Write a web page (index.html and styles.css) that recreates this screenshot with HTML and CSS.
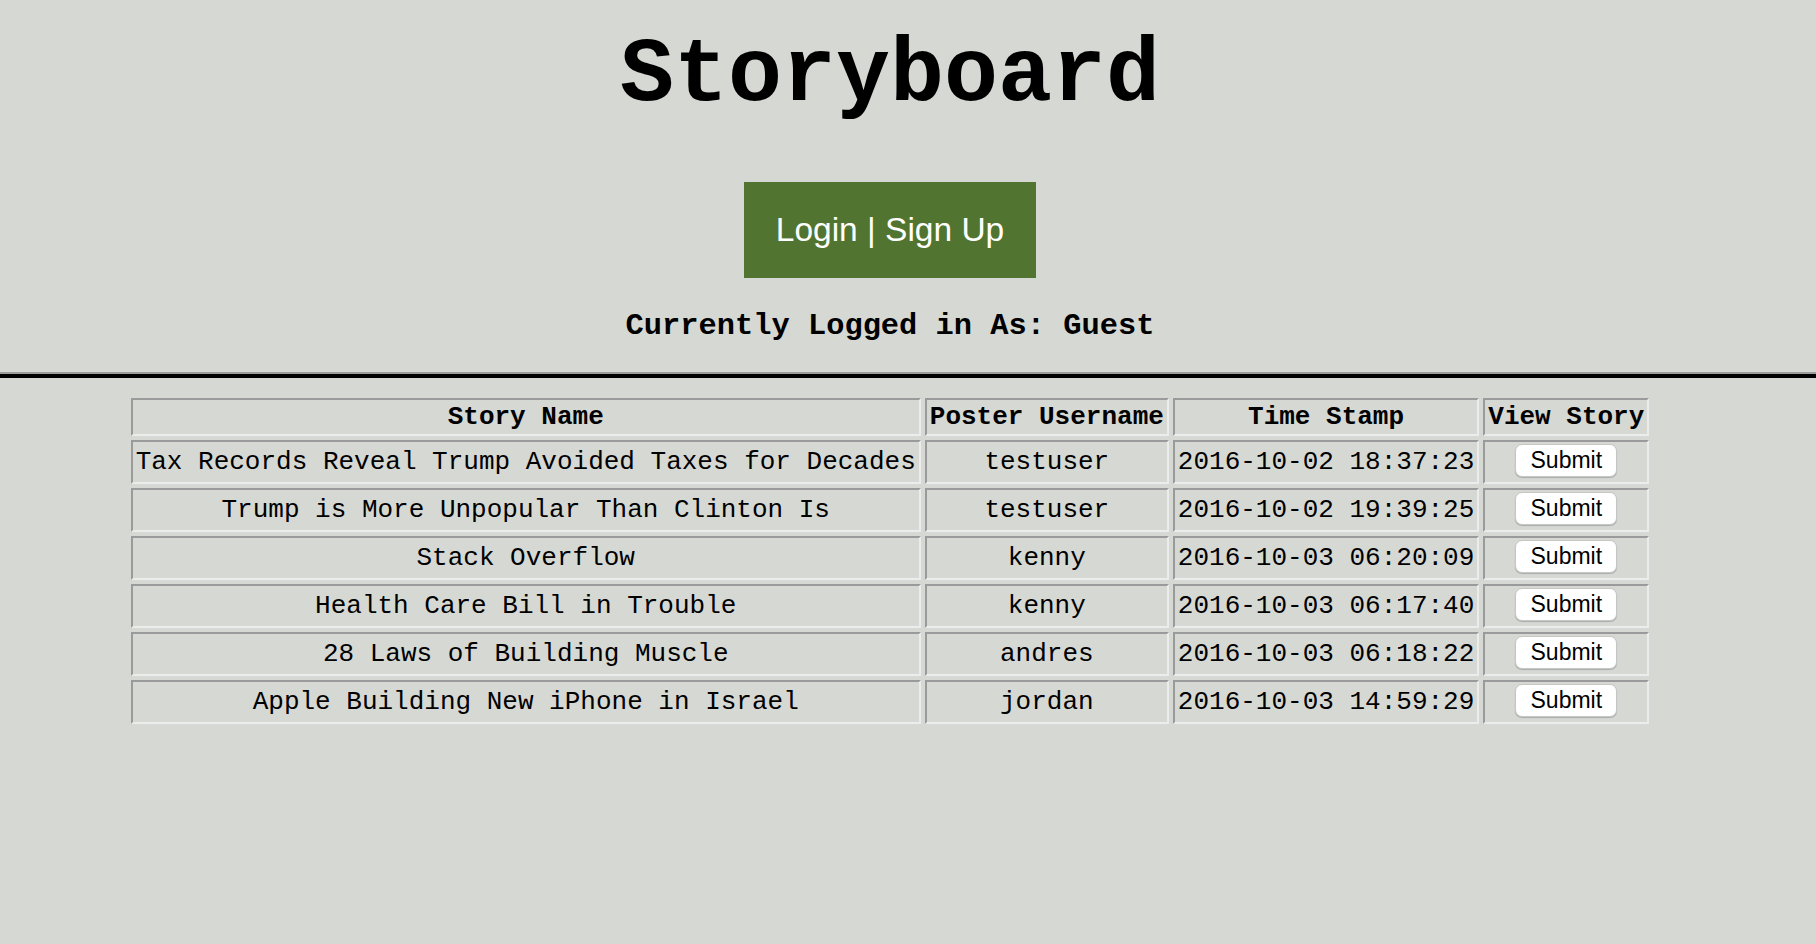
FILE: index.html
```html
<!DOCTYPE html>
<html>
<head>
<meta charset="utf-8">
<title>Storyboard</title>
<link rel="stylesheet" href="styles.css">
</head>
<body>
<header class="top">
  <h1 class="title">Storyboard</h1>
  <a class="login" href="#">Login | Sign Up</a>
  <h3 class="status">Currently Logged in As: Guest</h3>
</header>
<div class="rule"></div>
<main class="content">
  <table class="stories">
    <thead>
      <tr><th>Story Name</th><th>Poster Username</th><th>Time Stamp</th><th>View Story</th></tr>
    </thead>
    <tbody>
      <tr><td>Tax Records Reveal Trump Avoided Taxes for Decades</td><td>testuser</td><td>2016-10-02 18:37:23</td><td><button class="submit">Submit</button></td></tr>
      <tr><td>Trump is More Unpopular Than Clinton Is</td><td>testuser</td><td>2016-10-02 19:39:25</td><td><button class="submit">Submit</button></td></tr>
      <tr><td>Stack Overflow</td><td>kenny</td><td>2016-10-03 06:20:09</td><td><button class="submit">Submit</button></td></tr>
      <tr><td>Health Care Bill in Trouble</td><td>kenny</td><td>2016-10-03 06:17:40</td><td><button class="submit">Submit</button></td></tr>
      <tr><td>28 Laws of Building Muscle</td><td>andres</td><td>2016-10-03 06:18:22</td><td><button class="submit">Submit</button></td></tr>
      <tr><td>Apple Building New iPhone in Israel</td><td>jordan</td><td>2016-10-03 14:59:29</td><td><button class="submit">Submit</button></td></tr>
    </tbody>
  </table>
</main>
</body>
</html>
```
FILE: styles.css
```css
html, body {
  margin: 0;
  padding: 0;
  background: #d6d8d3;
  color: #000;
  font-family: "Liberation Mono", "Courier New", monospace;
}

.top {
  display: flex;
  flex-direction: column;
  align-items: center;
  margin-right: 36px;
}

.title {
  margin: 26px 0 0;
  font-size: 90px;
  line-height: 100px;
  font-weight: bold;
}

.login {
  margin-top: 56px;
  width: 292px;
  height: 96px;
  line-height: 96px;
  text-align: center;
  background: #517530;
  color: #fff;
  text-decoration: none;
  font-family: "Liberation Sans", Arial, sans-serif;
  font-size: 33.5px;
}

.status {
  margin: 30px 0 0;
  font-size: 30.4px;
  line-height: 36px;
  font-weight: bold;
}

.rule {
  margin-top: 28px;
  height: 4px;
  background: #000;
  border-top: 2px solid #9c9c9c;
}

.content {
  margin-right: 36px;
}

.stories {
  margin: 16px auto 0;
  border-collapse: separate;
  border-spacing: 4px;
  font-size: 26px;
  line-height: 30px;
}

.stories th,
.stories td {
  padding: 2px 3px;
  border-style: solid;
  border-width: 2px;
  border-color: #9a9a9a #ececec #ececec #9a9a9a;
  text-align: center;
  vertical-align: middle;
  white-space: nowrap;
}

.stories th {
  font-weight: bold;
}

.submit {
  display: inline-block;
  margin: 0 0 3px;
  width: 102px;
  height: 33px;
  padding: 0;
  vertical-align: middle;
  background: #fff;
  border: 1px solid #c6c6c6;
  border-radius: 7px;
  box-shadow: 0 1px 1px rgba(0, 0, 0, 0.2);
  font-family: "Liberation Sans", Arial, sans-serif;
  font-size: 23px;
  color: #000;
}
```
